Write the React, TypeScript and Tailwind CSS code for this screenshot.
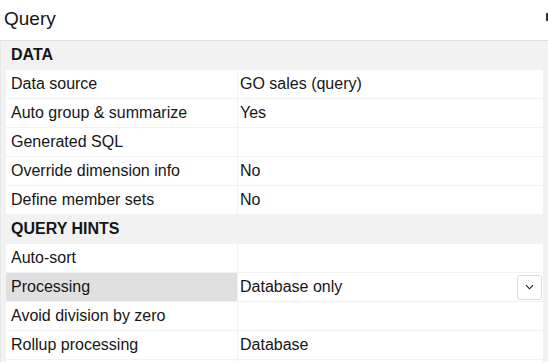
import React from "react";

type Row =
  | { kind: "section"; title: string }
  | { kind: "prop"; label: string; value?: string; selected?: boolean; dropdown?: boolean };

const rows: Row[] = [
  { kind: "section", title: "DATA" },
  { kind: "prop", label: "Data source", value: "GO sales (query)" },
  { kind: "prop", label: "Auto group & summarize", value: "Yes" },
  { kind: "prop", label: "Generated SQL" },
  { kind: "prop", label: "Override dimension info", value: "No" },
  { kind: "prop", label: "Define member sets", value: "No" },
  { kind: "section", title: "QUERY HINTS" },
  { kind: "prop", label: "Auto-sort" },
  { kind: "prop", label: "Processing", value: "Database only", selected: true, dropdown: true },
  { kind: "prop", label: "Avoid division by zero" },
  { kind: "prop", label: "Rollup processing", value: "Database" },
  { kind: "prop", label: "" },
];

const ChevronDown = () => (
  <svg viewBox="0 0 10 6" className="w-[9px] h-[6px] fill-none stroke-[#161616]" strokeWidth={1.2}>
    <path d="M1 1l4 4 4-4" />
  </svg>
);

export default function App() {
  return (
    <div
      className="w-[548px] h-[362px] overflow-hidden bg-white text-[#161616]"
      style={{ fontFamily: '"Liberation Sans", Arial, sans-serif' }}
    >
      {/* Panel title */}
      <div className="relative h-[41px] border-b border-[#e0e0e0] flex items-center pl-[4px]">
        <span className="text-[19px] leading-none -mt-[4px]">Query</span>
        {/* close button, clipped by the window edge */}
        <div className="absolute left-[546px] top-[13px] w-[2px] h-[8px] bg-[#333]" />
      </div>

      {/* Property sheet */}
      <div className="h-[321px] bg-[#f2f2f2] pl-[5px] pr-[5px] border-l border-[#e8e8e8] flex flex-col gap-px">
        {rows.map((row, i) =>
          row.kind === "section" ? (
            <div key={i} className="h-[28px] shrink-0 flex items-center pl-[5px] text-[16px] font-bold">
              {row.title}
            </div>
          ) : (
            <div key={i} className="h-[28px] shrink-0 grid grid-cols-[231px_1fr] gap-px">
              <div
                className={`flex items-center pl-[5px] text-[16px] ${
                  row.selected ? "bg-[#e0e0e0]" : "bg-white"
                }`}
              >
                {row.label}
              </div>
              <div className="flex items-center pl-[2px] pr-[1px] text-[16px] bg-white">
                <span className="flex-1">{row.value}</span>
                {row.dropdown && (
                  <div className="w-[25px] h-[25px] rounded-[3px] border border-[#dcdcdc] bg-white flex items-center justify-center">
                    <ChevronDown />
                  </div>
                )}
              </div>
            </div>
          )
        )}
      </div>
    </div>
  );
}
